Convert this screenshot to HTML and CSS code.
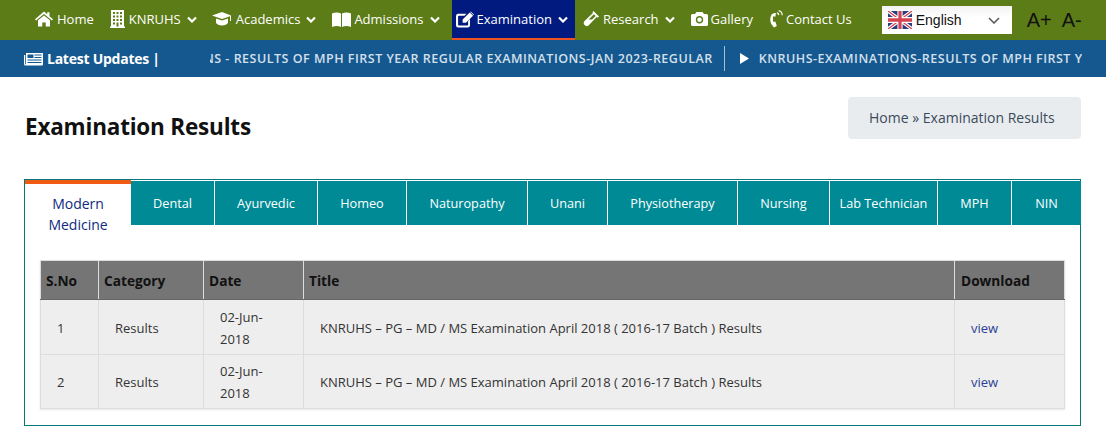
FILE: index.html
```html
<!DOCTYPE html>
<html lang="en">
<head>
<meta charset="utf-8">
<title>Examination Results</title>
<link rel="stylesheet" href="styles.css">
</head>
<body>
<header class="topbar">
  <nav class="nav">
    <a class="nav-item home"><svg class="ico" width="18" height="16" viewBox="0 0 18 16"><path d="M9 .5 0 8.200l1 1.400L9 2.900l8 6.700 1-1.400L14.500 5.200V1.200h-2.300v2z"/><path d="M9 4.400 3 9.300V15.500h4.300v-4h3.400v4H15V9.300z"/></svg>Home</a>
    <a class="nav-item knruhs"><svg class="ico" width="15" height="18" viewBox="0 0 15 18"><path fill-rule="evenodd" d="M1 0h13v16.500h1V18H0v-1.500h1zM3 2v2h2V2zm3.500 0v2h2V2zM10 2v2h2V2zM3 5.500v2h2v-2zm3.500 0v2h2v-2zm3.500 0v2h2v-2zM3 9v2h2V9zm3.500 0v2h2V9zM10 9v2h2V9zM3 12.500v2h2v-2zm7 0v2h2v-2zm-3.500 0v4h2v-4z"/></svg>KNRUHS<svg class="chev" width="10" height="7" viewBox="0 0 10 7"><path d="M1 1.500 5 5.500l4-4" /></svg></a>
    <a class="nav-item academics"><svg class="ico" width="20" height="14" viewBox="0 0 20 14"><path d="M10 0 0 3.500 10 7l8-2.800V9h1V3.500z"/><path d="M4 6.500V11c1.500 1.700 3.500 2.500 6 2.500s4.500-.8 6-2.500V6.500L10 8.600z"/></svg>Academics<svg class="chev" width="10" height="7" viewBox="0 0 10 7"><path d="M1 1.500 5 5.500l4-4"/></svg></a>
    <a class="nav-item admissions"><svg class="ico" width="19" height="15" viewBox="0 0 19 15"><path d="M0 1.500C3 0 6.500 0 9 1.500V15c-2.500-1.500-6-1.500-9 0z"/><path d="M10 1.500c2.500-1.500 6-1.500 9 0V15c-3-1.500-6.500-1.500-9 0z"/></svg>Admissions<svg class="chev" width="10" height="7" viewBox="0 0 10 7"><path d="M1 1.500 5 5.500l4-4"/></svg></a>
    <a class="nav-item active"><svg class="ico" width="18" height="17" viewBox="0 0 19 17"><path d="M2.500 2.500H11l-2 2H3a.8.8 0 0 0-.8.800V14a.8.800 0 0 0 .8.800h9a.8.800 0 0 0 .8-.800V10l2-2v6.500a2.500 2.500 0 0 1-2.500 2.500h-10A2.500 2.500 0 0 1 0 14.500v-9.500a2.500 2.500 0 0 1 2.500-2.500z"/><path d="M14.500 1 18 4.500 10.500 12H7v-3.500zM15.500 0l3.500 3.500-.5.500-3.500-3.500z"/></svg>Examination<svg class="chev" width="10" height="7" viewBox="0 0 10 7"><path d="M1 1.500 5 5.500l4-4"/></svg></a>
    <a class="nav-item research"><svg class="ico" width="16" height="16" viewBox="0 0 16 16"><path fill-rule="evenodd" d="M10.500 0 16 5.500 14.800 6.700l-.9-.9L5.500 14.500a3 3 0 0 1-4-4.400L10.200 1.700l-.9-.5zM10.900 3.300 5.600 8.600H9.100L12.600 5z"/></svg>Research<svg class="chev" width="10" height="7" viewBox="0 0 10 7"><path d="M1 1.500 5 5.500l4-4"/></svg></a>
    <a class="nav-item gallery"><svg class="ico" width="17" height="14" viewBox="0 0 17 14"><path fill-rule="evenodd" d="M5.500 0h6L13 2h2.500A1.500 1.500 0 0 1 17 3.500v9a1.500 1.500 0 0 1-1.500 1.500h-14A1.500 1.500 0 0 1 0 12.500v-9A1.500 1.500 0 0 1 1.500 2H4zM8.500 4a3.700 3.700 0 1 0 0 7.400 3.700 3.700 0 0 0 0-7.400z"/><circle cx="8.500" cy="7.700" r="2.300"/></svg>Gallery</a>
    <a class="nav-item contact"><svg class="ico" width="13" height="18" viewBox="0 0 13 18"><path d="M4.500 3 2 4C-.3 7.500-.3 11.500 2 15l2 2.500 2.800-1.500-1.500-4.500-2 .5c-.5-2-.5-3.800 0-5.700l2 .5L6 3.300z"/><path d="M7 2.200c1.500.3 2.300 1.300 2.300 3l-1.300-.1c0-.8-.4-1.300-1.200-1.500zM8.800 0c2.600.6 4 2.400 4 5.300h-1.200c0-2.200-1-3.500-3-4z"/></svg>Contact Us</a>
    <div class="lang">
      <svg class="flag" width="24" height="18" viewBox="0 0 60 40" preserveAspectRatio="none"><rect width="60" height="40" fill="#2c3d7f"/><path d="M0 0 60 40M60 0 0 40" stroke="#fff" stroke-width="8"/><path d="M0 0 60 40M60 0 0 40" stroke="#d4434f" stroke-width="3"/><path d="M30 0V40M0 20H60" stroke="#fff" stroke-width="13"/><path d="M30 0V40M0 20H60" stroke="#d4434f" stroke-width="8"/></svg>
      <span class="lang-name">English</span>
      <svg class="lang-caret" width="12" height="7" viewBox="0 0 12 7"><path d="M1 1 6 6l5-5"/></svg>
    </div>
    <div class="font-tools"><span>A+</span><span>A-</span></div>
  </nav>
</header>

<section class="ticker">
  <div class="ticker-label"><svg class="ticker-ico" width="19" height="14" viewBox="0 0 19 14"><path fill-rule="evenodd" d="M2 1h17v11.500a1 1 0 0 1-1 1H1.500A1.500 1.500 0 0 1 0 12V3h1.200v9a.4.400 0 0 0 .8 0zM3.500 2.500v3.500h6V2.500zm7 0v1h7v-1zm0 2.500v1h7V5zm-7 2.500v1h14v-1zm0 2.500v1h14v-1z"/></svg>Latest Updates |</div>
  <div class="ticker-window">
    <div class="ticker-track">
      <span class="ticker-msg first">KNRUHS-EXAMINATIONS - RESULTS OF MPH FIRST YEAR REGULAR EXAMINATIONS-JAN 2023-REGULAR</span>
      <span class="ticker-sep"></span>
      <svg class="ticker-play" width="9" height="11" viewBox="0 0 9 11"><path d="M0 0 9 5.500 0 11z"/></svg>
      <span class="ticker-msg">KNRUHS-EXAMINATIONS-RESULTS OF MPH FIRST YEAR REGULAR EXAMINATIONS</span>
    </div>
  </div>
</section>

<main class="content">
  <div class="page-head">
    <h1>Examination Results</h1>
    <div class="crumb">Home » Examination Results</div>
  </div>
  <div class="panel">
    <div class="tabs">
      <a class="tab current">Modern Medicine</a>
      <a class="tab">Dental</a>
      <a class="tab">Ayurvedic</a>
      <a class="tab">Homeo</a>
      <a class="tab">Naturopathy</a>
      <a class="tab">Unani</a>
      <a class="tab">Physiotherapy</a>
      <a class="tab">Nursing</a>
      <a class="tab">Lab Technician</a>
      <a class="tab">MPH</a>
      <a class="tab">NIN</a>
    </div>
    <table class="results">
      <thead>
        <tr><th class="c-no">S.No</th><th class="c-cat">Category</th><th class="c-date">Date</th><th class="c-title">Title</th><th class="c-dl">Download</th></tr>
      </thead>
      <tbody>
        <tr class="row-first"><td>1</td><td>Results</td><td>02-Jun-<br>2018</td><td>KNRUHS – PG – MD / MS Examination April 2018 ( 2016-17 Batch ) Results</td><td><a class="view">view</a></td></tr>
        <tr><td>2</td><td>Results</td><td>02-Jun-<br>2018</td><td>KNRUHS – PG – MD / MS Examination April 2018 ( 2016-17 Batch ) Results</td><td><a class="view">view</a></td></tr>
      </tbody>
    </table>
  </div>
</main>
</body>
</html>
```
FILE: styles.css
```css
* { box-sizing: border-box; }
html, body { margin: 0; padding: 0; }
body { width: 1106px; height: 432px; overflow: hidden; background: #fff; font-family: "Open Sans", "Liberation Sans", sans-serif; font-size: 13px; color: #333; }

.topbar { height: 40px; background: #5c7c17; }
.nav { display: flex; align-items: center; height: 40px; padding-left: 35px; color: #fff; }
.nav-item { display: flex; align-items: center; height: 40px; padding-bottom: 2px; font-size: 13px; white-space: nowrap; }
.ico { fill: #fff; margin-right: 3px; flex: none; }
.home .ico, .knruhs .ico, .academics .ico, .research .ico { margin-right: 4px; }
.active .ico { margin-right: 3px; }
.chev { fill: none; stroke: #fff; stroke-width: 2.200; margin-left: 6px; flex: none; }
.home { margin-right: 16px; }
.knruhs { margin-right: 15px; }
.academics { margin-right: 16px; }
.admissions { margin-right: 12px; }
.active { background: #001a80; border-bottom: 2px solid #ee5222; padding: 0 7px 0 4px; margin-right: 8px; }
.research { margin-right: 16px; }
.gallery { margin-right: 17px; }
.contact { margin-right: 30px; }

.lang { display: flex; align-items: center; width: 130px; height: 28px; padding: 0 12px 0 6px; background: linear-gradient(#f2f2f2, #fff 40%); font-family: "Liberation Sans", sans-serif; font-size: 14px; color: #111; }
.flag { flex: none; margin-right: 4px; }
.lang-name { flex: 1; }
.lang-caret { fill: none; stroke: #555; stroke-width: 1.500; }
.font-tools { display: flex; gap: 10px; margin-left: 15px; font-family: "Liberation Sans", sans-serif; font-size: 20px; color: #111; }

.ticker { display: flex; align-items: center; height: 37px; background: #15578f; color: #fff; padding-left: 24px; }
.ticker-label { display: flex; align-items: center; width: 186px; font-size: 14px; font-weight: 700; letter-spacing: -.25px; white-space: nowrap; }
.ticker-ico { fill: #fff; margin-right: 4px; flex: none; }
.ticker-window { width: 872px; overflow: hidden; }
.ticker-track { display: flex; align-items: center; margin-left: -147px; width: 1400px; color: #d3e0ec; font-size: 12.500px; font-weight: 600; letter-spacing: .5px; white-space: nowrap; }
.ticker-sep { width: 1px; height: 25px; background: #a9bfd4; margin: 0 15px 0 11px; flex: none; }
.ticker-play { fill: #fff; margin-right: 10px; flex: none; }

.content { padding: 20px 25px 0 24px; }
.page-head { display: flex; justify-content: space-between; align-items: flex-start; height: 82px; }
h1 { margin: 14px 0 0 1px; font-size: 22.500px; line-height: 32px; font-weight: 700; letter-spacing: -.2px; color: #111; }
.crumb { width: 233px; height: 42px; line-height: 42px; padding-left: 21px; background: #e9ecef; border-radius: 4px; font-size: 14px; color: #3a4a5a; }

.panel { height: 247px; border: 1px solid #05777f; padding: 1px 0 0; }
.tabs { display: grid; grid-template-columns: 105px 83px 102px 88px 120px 79px 129px 91px 107px 73px 69px; column-gap: 1px; align-items: start; width: 1056px; height: 44px; }
.tab { display: flex; align-items: center; justify-content: center; height: 44px; background: #008a96; color: #fff; font-size: 12.700px; text-align: center; }
.tab.current { height: 60px; margin-top: -1px; margin-right: -1px; padding: 4px 12px 0; background: #fff; border-top: 4px solid #f15a12; color: #0e2a80; font-size: 14px; line-height: 21px; }

.results { width: 1024px; margin: 35px 0 0 15px; border-collapse: collapse; table-layout: fixed; box-shadow: 0 1px 2px rgba(0,0,0,.1); }
.c-no { width: 58px; }
.c-cat { width: 105px; }
.c-date { width: 100px; }
.c-title { width: 651px; }
.c-dl { width: 110px; }
th { height: 39px; padding: 0 0 0 5px; background: #757575; border: 1px solid #ddd; border-bottom-color: #666; font-size: 13.700px; font-weight: 700; color: #111; text-align: left; }
th.c-dl { padding-left: 6px; }
td { height: 54px; padding: 0 0 0 16px; background: #eee; border: 1px solid #ddd; font-size: 13px; line-height: 22px; color: #333; }
.row-first td { height: 55px; padding-top: 1px; }
.view { color: #2b3f93; }
```
